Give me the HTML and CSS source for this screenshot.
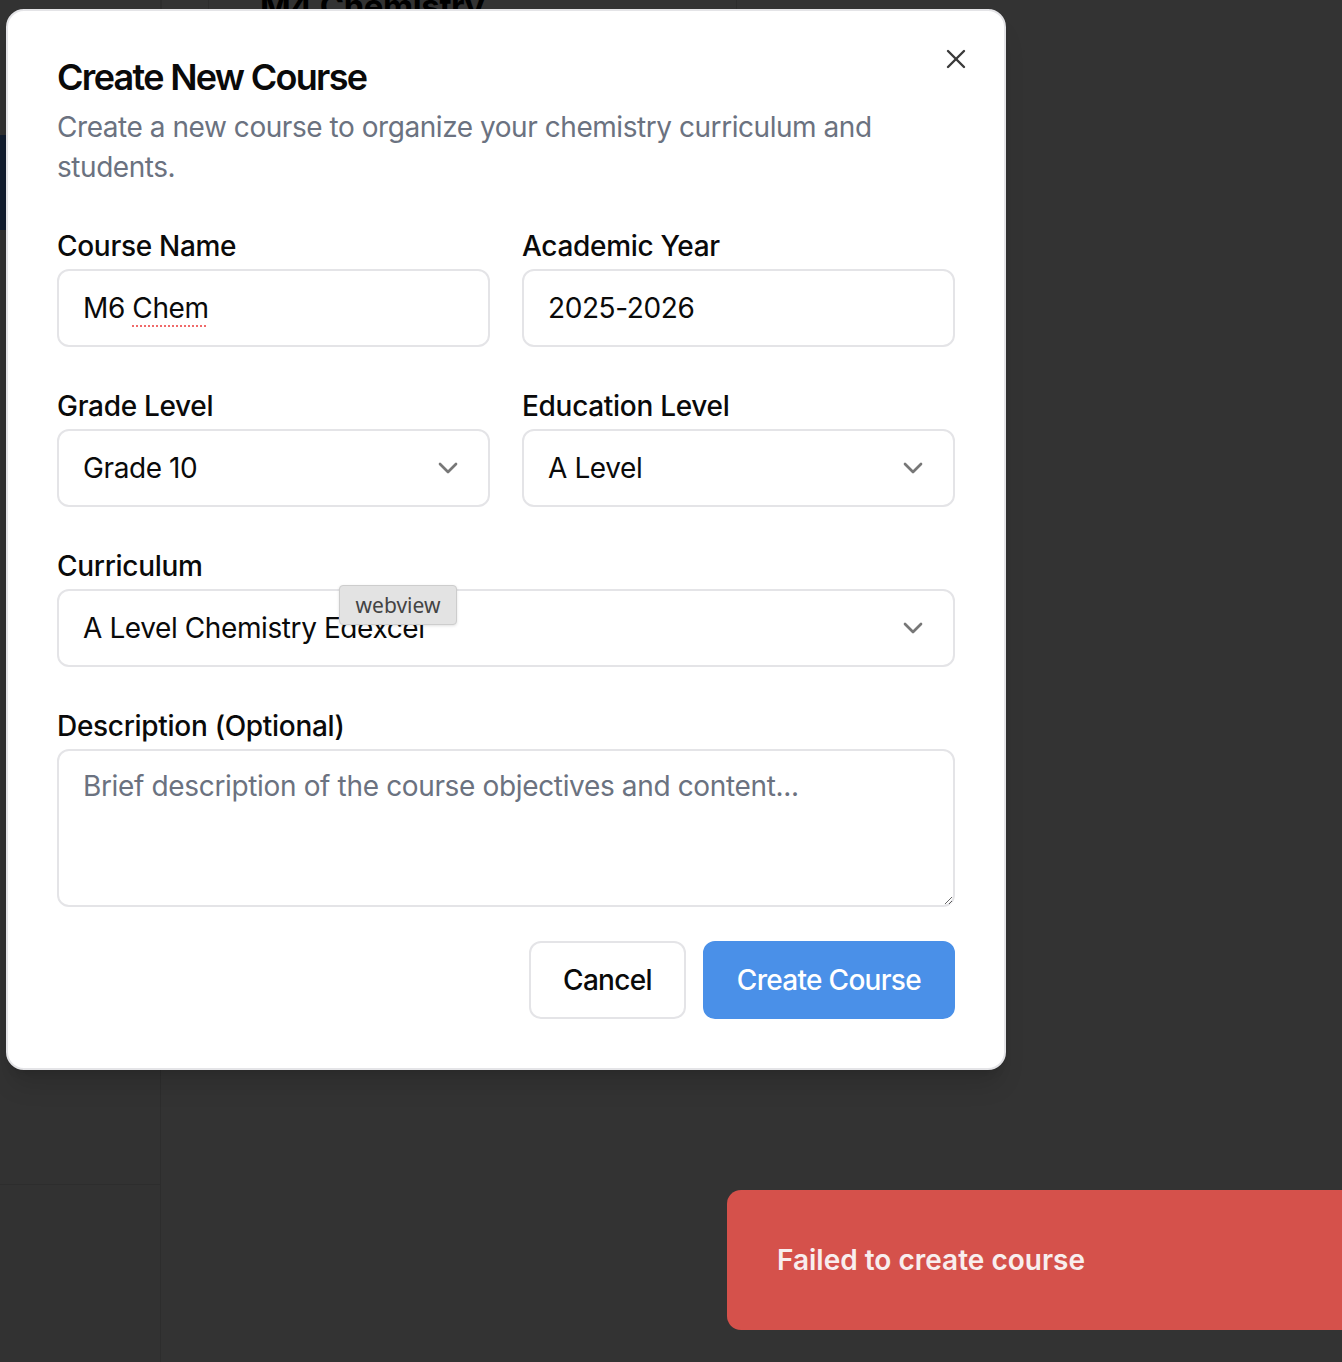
FILE: index.html
```html
<!DOCTYPE html>
<html lang="en">
<head>
<meta charset="utf-8">
<title>Create New Course</title>
<link rel="stylesheet" href="styles.css">
</head>
<body>
<div class="page">
  <aside class="sidebar">
    <div class="sidebar-top"></div>
    <div class="sidebar-nav"></div>
    <div class="sidebar-bottom"></div>
  </aside>
  <main class="main">
    <div class="main-head">
      <div class="head-spacer"></div>
      <h2 class="page-title">M4 Chemistry</h2>
    </div>
  </main>
</div>

<div class="modal" role="dialog" aria-labelledby="dlg-title">
  <button class="close" aria-label="Close">
    <svg viewBox="0 0 24 24" width="32" height="32" fill="none" stroke="currentColor" stroke-width="1.8" stroke-linecap="round" stroke-linejoin="round"><path d="M18 6 6 18"/><path d="m6 6 12 12"/></svg>
  </button>
  <header class="modal-head">
    <h1 id="dlg-title" class="title">Create New Course</h1>
    <p class="subtitle">Create a new course to organize your chemistry curriculum and students.</p>
  </header>
  <form class="form">
    <div class="row">
      <div class="group">
        <label class="label">Course Name</label>
        <div class="field">M6 <span class="spell">Chem</span></div>
      </div>
      <div class="group">
        <label class="label">Academic Year</label>
        <div class="field">2025-2026</div>
      </div>
    </div>
    <div class="row">
      <div class="group">
        <label class="label">Grade Level</label>
        <div class="field select"><span>Grade 10</span>
          <svg class="chev" viewBox="0 0 24 24" width="32" height="32" fill="none" stroke="currentColor" stroke-width="2" stroke-linecap="round" stroke-linejoin="round"><path d="m6 9 6 6 6-6"/></svg>
        </div>
      </div>
      <div class="group">
        <label class="label">Education Level</label>
        <div class="field select"><span>A Level</span>
          <svg class="chev" viewBox="0 0 24 24" width="32" height="32" fill="none" stroke="currentColor" stroke-width="2" stroke-linecap="round" stroke-linejoin="round"><path d="m6 9 6 6 6-6"/></svg>
        </div>
      </div>
    </div>
    <div class="group">
      <label class="label">Curriculum</label>
      <div class="field select"><span>A Level Chemistry Edexcel</span>
        <svg class="chev" viewBox="0 0 24 24" width="32" height="32" fill="none" stroke="currentColor" stroke-width="2" stroke-linecap="round" stroke-linejoin="round"><path d="m6 9 6 6 6-6"/></svg>
      </div>
    </div>
    <div class="group">
      <label class="label">Description (Optional)</label>
      <textarea class="textarea" placeholder="Brief description of the course objectives and content..."></textarea>
    </div>
    <div class="actions">
      <button type="button" class="btn btn-outline">Cancel</button>
      <button type="button" class="btn btn-primary">Create Course</button>
    </div>
  </form>
</div>

<div class="tooltip">webview</div>

<div class="toast">Failed to create course</div>
</body>
</html>
```

FILE: styles.css
```css
html, body {
  margin: 0;
  padding: 0;
}
body {
  width: 1342px;
  height: 1362px;
  overflow: hidden;
  background: #333333;
  position: relative;
  font-family: Inter, "Noto Sans", sans-serif;
}

/* dimmed page underneath */
.page {
  display: flex;
  height: 100%;
}
.sidebar {
  width: 160px;
  flex: none;
  border-right: 1px solid #2d2d2d;
  background: #323232;
  display: flex;
  flex-direction: column;
}
.sidebar-top {
  height: 135px;
}
.sidebar-nav {
  height: 95px;
  width: 8px;
  background: #121d2f;
}
.sidebar-bottom {
  margin-top: 954px;
  border-top: 1px solid #2d2d2d;
  flex: 1;
}
.main {
  flex: 1;
}
.main-head {
  display: flex;
  height: 20px;
  overflow: hidden;
  border-left: 1px solid #2d2d2d;
}
.head-spacer {
  width: 46px;
  border-right: 1px solid #2d2d2d;
}
.page-title {
  margin: -14px 0 0 51px;
  font-size: 33px;
  line-height: 40px;
  font-weight: 700;
  letter-spacing: -0.4px;
  color: #000;
  width: 476px;
  border-right: 1px solid #2d2d2d;
}

/* modal */
.modal {
  position: absolute;
  left: 6px;
  top: 9px;
  width: 1000px;
  box-sizing: border-box;
  background: #ffffff;
  border: 2px solid #e4e4e7;
  border-radius: 18px;
  padding: 46px 49px 49px;
  box-shadow: 0 20px 25px -5px rgba(0, 0, 0, 0.12), 0 8px 10px -6px rgba(0, 0, 0, 0.12);
}
.close {
  position: absolute;
  top: 32px;
  right: 32px;
  width: 32px;
  height: 32px;
  padding: 0;
  border: 0;
  background: none;
  color: #3a3a3a;
  display: flex;
}
.title {
  margin: 0;
  font-size: 36px;
  line-height: 40px;
  font-weight: 600;
  letter-spacing: -1.7px;
  color: #0a0a0a;
}
.subtitle {
  margin: 10px 0 0;
  font-size: 28px;
  line-height: 40px;
  letter-spacing: -0.45px;
  color: #6b7280;
}
.form {
  margin-top: 45px;
  display: flex;
  flex-direction: column;
  gap: 45px;
}
.row {
  display: grid;
  grid-template-columns: 1fr 1fr;
  gap: 32px;
}
.group {
  display: flex;
  flex-direction: column;
  gap: 9px;
}
.label {
  font-size: 28px;
  line-height: 28px;
  font-weight: 500;
  letter-spacing: -0.3px;
  color: #0a0a0a;
}
.field {
  box-sizing: border-box;
  height: 78px;
  border: 2px solid #e4e4e7;
  border-radius: 12px;
  padding: 0 24px;
  display: flex;
  align-items: center;
  font-size: 28px;
  letter-spacing: -0.4px;
  color: #0a0a0a;
  white-space: pre;
}
.spell {
  text-decoration: underline dotted #f06a6a;
  text-decoration-thickness: 2px;
  text-underline-offset: 7px;
}
.select {
  justify-content: space-between;
}
.chev {
  color: #777777;
  flex: none;
}
.textarea {
  box-sizing: border-box;
  height: 158px;
  border: 2px solid #e4e4e7;
  border-radius: 12px;
  padding: 15px 24px;
  font-family: Inter, "Noto Sans", sans-serif;
  font-size: 28px;
  line-height: 40px;
  letter-spacing: -0.35px;
  color: #0a0a0a;
  outline: none;
  resize: vertical;
  margin: 0;
}
.textarea::placeholder {
  color: #6b7280;
}
.actions {
  display: flex;
  justify-content: flex-end;
  gap: 17px;
  margin-top: -11px;
}
.btn {
  box-sizing: border-box;
  height: 78px;
  padding: 0 32px;
  border-radius: 12px;
  font-family: Inter, "Noto Sans", sans-serif;
  font-size: 28px;
  font-weight: 500;
  letter-spacing: -0.7px;
}
.btn-outline {
  background: #ffffff;
  border: 2px solid #e4e4e7;
  color: #0a0a0a;
}
.btn-primary {
  background: #4a90e8;
  border: 2px solid #4a90e8;
  color: #ffffff;
}

/* native tooltip */
.tooltip {
  position: absolute;
  left: 339px;
  top: 585px;
  width: 118px;
  height: 40px;
  box-sizing: border-box;
  background: #e3e3e3;
  border: 1px solid #cdcdcd;
  border-radius: 4px;
  box-shadow: 0 1px 3px rgba(0, 0, 0, 0.12);
  display: flex;
  align-items: center;
  justify-content: center;
  font-family: "Noto Sans", Inter, sans-serif;
  font-size: 21px;
  color: #444444;
}

/* toast */
.toast {
  position: absolute;
  left: 727px;
  top: 1190px;
  width: 700px;
  height: 140px;
  box-sizing: border-box;
  padding-left: 50px;
  background: #d5514b;
  border-radius: 14px;
  display: flex;
  align-items: center;
  font-size: 28px;
  font-weight: 600;
  color: #f8eeee;
}
```
